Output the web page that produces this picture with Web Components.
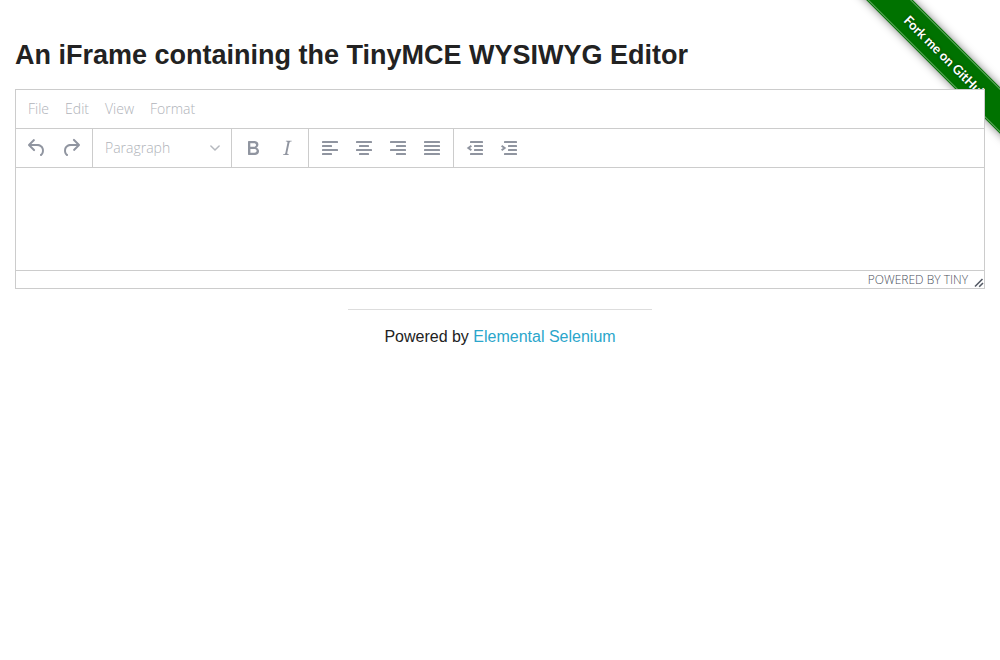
<!DOCTYPE html>
<html lang="en">
<head>
<meta charset="utf-8">
<title>The Internet</title>
<style>
body { margin: 0; background: #fff; color: #222; font-family: "Liberation Sans", Arial, sans-serif; }
</style>
</head>
<body>
<demo-page>
  <fork-ribbon slot="ribbon">Fork me on GitHub</fork-ribbon>
  <span slot="title">An iFrame containing the TinyMCE WYSIWYG Editor</span>
  <rich-editor></rich-editor>
  <page-footer slot="footer"></page-footer>
</demo-page>
<script>
class BaseElement extends HTMLElement {
  constructor() {
    super();
    this.attachShadow({ mode: "open" }).innerHTML = this.template();
  }
}

customElements.define("demo-page", class extends BaseElement {
  template() {
    return `<style>
      :host { display: block; position: relative; overflow-x: clip; }
      main { position: relative; padding: 36px 15px 20px; }
      h3 { margin: 0 0 15px; font-size: 27px; line-height: 38px; font-weight: 700; }
    </style>
    <slot name="ribbon"></slot>
    <main><h3><slot name="title"></slot></h3><slot></slot></main>
    <slot name="footer"></slot>`;
  }
});

customElements.define("fork-ribbon", class extends BaseElement {
  template() {
    return `<style>
      :host { display: block; position: absolute; top: 0; right: 0; width: 149px; height: 149px; overflow: hidden; }
      a { position: absolute; top: 37px; left: -15px; width: 214px; height: 33px; box-sizing: border-box;
          padding: 1px 0; transform: rotate(45deg); background: #007200; color: #fff;
          box-shadow: 0 0 8px rgba(0,0,0,.5); text-decoration: none;
          font: 700 13px/27px Lato, "Open Sans", sans-serif; text-shadow: 0 0 3px rgba(0,0,0,.5); }
      span { display: block; padding: 2px 0 0 56px; border: solid #5fa65f; border-width: 1px 0; }
    </style><a href="https://github.com/tourdedave/the-internet"><span><slot></slot></span></a>`;
  }
});

const bars = rows => rows.map(([x, w], i) => `<rect x="${x}" y="${5 + i * 4}" width="${w}" height="2" rx=".6"/>`).join("");
const icons = {
  undo: '<path d="M6.4 8H12c3.7 0 6.2 2 6.8 5.1.6 2.7-.4 5.6-2.3 6.8a1 1 0 01-1-1.8c1.1-.6 1.8-2.7 1.4-4.6-.5-2.1-2.1-3.5-4.9-3.5H6.4l3.3 3.3a1 1 0 11-1.4 1.4l-5-5a1 1 0 010-1.4l5-5a1 1 0 011.4 1.4L6.4 8z"/>',
  redo: '<path d="M17.6 10H12c-2.8 0-4.4 1.4-4.9 3.5-.4 2 .3 4 1.4 4.6a1 1 0 11-1 1.8c-2-1.2-2.9-4.1-2.3-6.8.6-3 3-5.1 6.8-5.1h5.6l-3.3-3.3a1 1 0 111.4-1.4l5 5a1 1 0 010 1.4l-5 5a1 1 0 01-1.4-1.4l3.3-3.3z"/>',
  bold: '<path d="M7.8 19c-.3 0-.5 0-.6-.2l-.2-.5V5.7c0-.2 0-.4.2-.5l.6-.2h5c1.5 0 2.7.3 3.5 1 .7.6 1.1 1.4 1.1 2.5a3 3 0 01-.6 1.9c-.4.6-1 1-1.6 1.2.4.1.9.3 1.3.6s.8.7 1 1.2c.4.4.5 1 .5 1.6 0 1.3-.4 2.3-1.3 3-.8.7-2.1 1-3.8 1H7.8zm5-8.3c.6 0 1.2-.1 1.6-.5.4-.3.6-.7.6-1.3 0-1.1-.8-1.7-2.3-1.7H9.3v3.5h3.4zm.5 6c.7 0 1.3-.1 1.7-.4.4-.4.6-.9.6-1.5s-.2-1-.7-1.4c-.4-.3-1-.4-2-.4H9.4v3.8h4z"/>',
  italic: '<path d="M16.7 4.7l-.1.9h-.3c-.6 0-1 0-1.4.3-.3.3-.4.6-.5 1.1l-2.1 9.8v.6c0 .5.4.8 1.4.8h.2l-.2.8H8l.2-.8h.2c1.1 0 1.8-.5 2-1.5l2-9.8.1-.5c0-.6-.4-.8-1.4-.8h-.3l.2-.9h5.8z"/>',
  left: bars([[4, 16], [4, 10], [4, 16], [4, 10]]),
  center: bars([[4, 16], [7, 10], [4, 16], [7, 10]]),
  right: bars([[4, 16], [10, 10], [4, 16], [10, 10]]),
  justify: bars([[4, 16], [4, 16], [4, 16], [4, 16]]),
  outdent: bars([[7, 13], [11, 9], [11, 9], [7, 13]]) + '<path d="M8.4 9.8L5.4 12l3 2.2" fill="none" stroke="currentColor" stroke-width="2"/>',
  indent: bars([[7, 13], [11, 9], [11, 9], [7, 13]]) + '<path d="M4.6 9.8L7.6 12l-3 2.2" fill="none" stroke="currentColor" stroke-width="2"/>'
};

customElements.define("tool-button", class extends BaseElement {
  template() {
    return `<style>
      :host { display: block; }
      button { display: grid; place-items: center; width: 34px; height: 34px; margin: 0; padding: 0; border: 0; background: none; color: #9095a0; }
      svg { display: block; fill: currentColor; }
    </style><button type="button" disabled aria-label="${this.getAttribute("label")}"><svg width="24" height="24" viewBox="0 0 24 24">${icons[this.getAttribute("icon")]}</svg></button>`;
  }
});

customElements.define("tool-group", class extends BaseElement {
  template() {
    return `<style>
      :host { display: flex; align-items: center; height: 38px; padding: 0 4px; border-right: 1px solid #ccc; }
      :host(:last-of-type) { border-right: 0; }
    </style><slot></slot>`;
  }
});

customElements.define("block-select", class extends BaseElement {
  template() {
    return `<style>
      :host { display: grid; align-items: center; width: 130px; }
      select, svg { grid-area: 1 / 1; }
      select { appearance: none; width: 100%; height: 34px; margin: 0; padding: 0 24px 0 8px; border: 0; background: none;
        color: #b0b3b9; opacity: 1; font: 300 14px/34px "Open Sans", "Noto Sans", sans-serif; }
      svg { justify-self: end; margin-right: 7px; pointer-events: none; }
    </style><select aria-label="Blocks" disabled><option>Paragraph</option></select>
    <svg width="10" height="10" viewBox="0 0 10 10" fill="none" stroke="#b5b8be" stroke-width="1.5" stroke-linecap="round"><path d="M.9 3L5 7l4.1-4"/></svg>`;
  }
});

customElements.define("editor-menubar", class extends BaseElement {
  template() {
    return `<style>
      :host { display: flex; align-items: center; height: 38px; padding: 0 4px; }
      button { height: 34px; margin: 0; padding: 0 8px; border: 0; background: none; color: #b0b3b9; font: 300 14px/34px "Open Sans", "Noto Sans", sans-serif; }
    </style>` + ["File", "Edit", "View", "Format"].map(t => `<button type="button" disabled>${t}</button>`).join("");
  }
});

customElements.define("editor-statusbar", class extends BaseElement {
  template() {
    return `<style>
      :host { display: flex; justify-content: flex-end; align-items: center; height: 17px; border-top: 1px solid #ccc; }
      a { margin-right: 6px; color: #4a505c; text-decoration: none; text-transform: uppercase; font: 300 12px/17px "Open Sans", "Noto Sans", sans-serif; }
      svg { display: block; align-self: flex-end; }
    </style><a href="https://www.tiny.cloud/">Powered by Tiny</a>
    <svg width="10" height="10" viewBox="0 0 10 10" fill="none" stroke="#555b66" stroke-width="1.6"><path d="M1 8.5L8.5 1M5.2 8.7L9 5"/></svg>`;
  }
});

customElements.define("rich-editor", class extends BaseElement {
  template() {
    return `<style>
      :host { display: block; border: 1px solid #ccc; background: #fff; }
      .tools { display: flex; flex-wrap: wrap; border: solid #ccc; border-width: 1px 0; }
      .content { min-height: 102px; }
    </style>
    <editor-menubar></editor-menubar>
    <div class="tools" role="toolbar">
      <tool-group><tool-button icon="undo" label="Undo"></tool-button><tool-button icon="redo" label="Redo"></tool-button></tool-group>
      <tool-group><block-select></block-select></tool-group>
      <tool-group><tool-button icon="bold" label="Bold"></tool-button><tool-button icon="italic" label="Italic"></tool-button></tool-group>
      <tool-group><tool-button icon="left" label="Align left"></tool-button><tool-button icon="center" label="Align center"></tool-button><tool-button icon="right" label="Align right"></tool-button><tool-button icon="justify" label="Justify"></tool-button></tool-group>
      <tool-group><tool-button icon="outdent" label="Decrease indent"></tool-button><tool-button icon="indent" label="Increase indent"></tool-button></tool-group>
    </div>
    <div class="content" role="textbox" aria-label="Rich text area" aria-readonly="true"></div>
    <editor-statusbar></editor-statusbar>`;
  }
});

customElements.define("page-footer", class extends BaseElement {
  template() {
    return `<style>
      :host { display: block; padding: 0 15px; text-align: center; }
      hr { width: 304px; max-width: 100%; margin: 0 auto 14px; border: 0; border-top: 1px solid #ddd; }
      p { margin: 0; font-size: 16px; line-height: 26px; }
      a { color: #2ba6cb; text-decoration: none; }
    </style><hr><p>Powered by <a href="http://elementalselenium.com/">Elemental Selenium</a></p>`;
  }
});
</script>
</body>
</html>
